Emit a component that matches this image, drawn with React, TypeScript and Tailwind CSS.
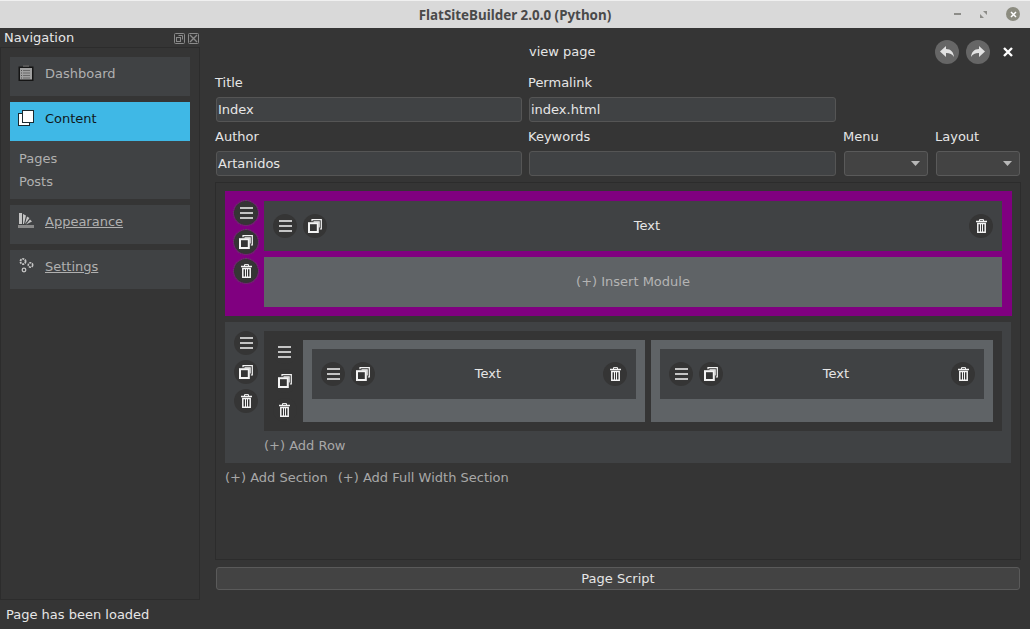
import React from 'react';

const Bars = () => (
  <svg width="13" height="12" viewBox="0 0 13 12" fill="none" stroke="#f4f4f4" strokeWidth="1.5">
    <path d="M0 1h13M0 6h13M0 11h13" />
  </svg>
);

const Copy = () => (
  <svg width="14" height="14" viewBox="0 0 14 14" fill="none" stroke="#f4f4f4">
    <rect x="1" y="4.200" width="8.800" height="8.800" strokeWidth="2" />
    <path d="M4 2.200V0.700H13.300V10H11.800" strokeWidth="1.200" />
    <path d="M5.500 2.900H11.200V8.500" strokeWidth="1.100" />
  </svg>
);

const Trash = () => (
  <svg width="11" height="14" viewBox="0 0 11 14" fill="none" stroke="#f4f4f4">
    <path d="M0 2.500h11" strokeWidth="1.500" />
    <path d="M3.500 2V0.600h4V2" strokeWidth="1" />
    <path d="M1.800 4.500h7.400v8.700H1.800z" strokeWidth="1.500" />
    <path d="M4.500 5v8M6.500 5v8" strokeWidth="1" />
  </svg>
);

const Round = ({ children, dotted }: { children: React.ReactNode; dotted?: boolean }) => (
  <div className={`flex h-6 w-6 items-center justify-center rounded-full bg-[#353535] ${dotted ? 'outline-1 outline-dotted outline-[#555555]' : ''}`}>
    {children}
  </div>
);

const ElementBar = () => (
  <div className="flex h-[50px] items-center bg-[#404244] px-[9px] text-[#e6e6e6]">
    <div className="flex gap-[6px]">
      <Round><Bars /></Round>
      <Round><Copy /></Round>
    </div>
    <div className="flex-1 pr-[2px] text-center">Text</div>
    <Round><Trash /></Round>
  </div>
);

const SideTools = ({ dotted }: { dotted?: boolean }) => (
  <div className="flex w-6 flex-col items-center gap-[5px]">
    <Round dotted={dotted}><Bars /></Round>
    <Round dotted={dotted}><Copy /></Round>
    <Round dotted={dotted}><Trash /></Round>
  </div>
);

const NavItem = ({ icon, label, link, active }: { icon: React.ReactNode; label: string; link?: boolean; active?: boolean }) => (
  <div className={`flex h-[39px] items-start pl-2 pt-[9px] ${active ? 'bg-[#3fb8e6] text-[#10181c]' : 'bg-[#404244] text-[#b0b0b0]'}`}>
    <div className="-mt-px flex h-4 w-4 items-center justify-center">{icon}</div>
    <span className={`ml-[11px] ${link ? 'underline' : ''}`}>{label}</span>
  </div>
);

const Field = ({ label, value, width = 'w-[307px]' }: { label: string; value?: string; width?: string }) => (
  <div className={`flex flex-col ${width}`}>
    <div className="-ml-px h-[23px] pt-px text-[#e6e6e6]">{label}</div>
    <div className="flex h-[25px] items-center rounded-[3px] border border-[#555555] bg-[#404244] pl-[1px] text-[#e6e6e6]">{value}</div>
  </div>
);

const Combo = ({ label }: { label: string }) => (
  <div className="flex w-[84px] flex-col">
    <div className="-ml-px h-[23px] pt-px text-[#e6e6e6]">{label}</div>
    <div className="flex h-[25px] items-center justify-end rounded-[3px] border border-[#5a5a5a] bg-[#434343] pr-[7px]">
      <svg width="9" height="5" viewBox="0 0 9 5"><path d="M0 0h9L4.500 5z" fill="#b8b8b8" /></svg>
    </div>
  </div>
);

export default function App() {
  return (
    <div className="flex h-[629px] w-[1030px] flex-col overflow-hidden bg-[#353535] font-['DejaVu_Sans',sans-serif] text-[13px] leading-[16px]">
      <div className="relative flex h-[28px] items-center justify-center border-t border-[#f0f0f0] bg-[#d9d9d9] font-['Noto_Sans',sans-serif] text-[13.4px] font-bold text-[#4a4a4a]">
        FlatSiteBuilder 2.0.0 (Python)
        <div className="absolute right-[10px] top-[6px] flex items-center gap-[19px]">
          <div className="h-[2px] w-[7px] bg-[#8c8c88]" />
          <svg width="7" height="7" viewBox="0 0 7 7" fill="#8c8c88"><path d="M3 0h4v4zM0 3l4 4H0z" /></svg>
          <div className="flex h-[14px] w-[14px] items-center justify-center rounded-full bg-[#8c8c80]">
            <svg width="7" height="7" viewBox="0 0 7 7" stroke="#ffffff" strokeWidth="1.500"><path d="M1 1l5 5M6 1L1 6" /></svg>
          </div>
        </div>
      </div>

      <div className="flex flex-1">
        <div className="flex w-[200px] flex-col">
          <div className="flex h-[19px] items-center justify-between pl-1 pr-[1px] pt-[1px] text-[#e6e6e6]">
            <span>Navigation</span>
            <div className="flex gap-[3px]">
              <svg width="11" height="11" viewBox="0 0 11 11" fill="none" stroke="#8a8a8a"><rect x="0.500" y="0.500" width="10" height="10" rx="1" /><rect x="2.500" y="4.500" width="4" height="4" /><path d="M4.500 2.500h4v4" /></svg>
              <svg width="11" height="11" viewBox="0 0 11 11" fill="none" stroke="#8a8a8a"><rect x="0.500" y="0.500" width="10" height="10" rx="1" /><path d="M2 2l7 7M9 2l-7 7" strokeWidth="1.400" /></svg>
            </div>
          </div>
          <div className="flex h-[553px] w-[200px] flex-col border border-[#2c2c2c] p-[9px]">
            <NavItem
              label="Dashboard"
              icon={
                <svg width="16" height="16" viewBox="0 0 16 16">
                  <rect x="0.500" y="1.500" width="15" height="14.500" fill="#151515" />
                  <rect x="2" y="3" width="12" height="11.500" fill="#a0a0a0" />
                  <rect x="5" y="0" width="6" height="2" fill="#555555" />
                  <path d="M5 5.500h7M5 8h7M5 10.500h7M5 13h7" stroke="#5c5c5c" strokeWidth="0.800" />
                  <path d="M3 5.500h1M3 8h1M3 10.500h1M3 13h1" stroke="#3a3a3a" strokeWidth="0.800" />
                </svg>
              }
            />
            <div className="mt-[6px]">
              <NavItem
                active
                label="Content"
                icon={
                  <svg width="16" height="16" viewBox="0 0 16 16" fill="#ffffff" stroke="#1a2a30" strokeWidth="1">
                    <rect x="0.500" y="3.500" width="11" height="12" />
                    <rect x="4.500" y="0.500" width="11" height="12" />
                  </svg>
                }
              />
            </div>
            <div className="flex h-[58px] flex-col gap-[7px] bg-[#404244] pl-[9px] pt-[10px] text-[#b0b0b0]">
              <span>Pages</span>
              <span>Posts</span>
            </div>
            <div className="mt-[6px]">
              <NavItem
                link
                label="Appearance"
                icon={
                  <svg width="16" height="16" viewBox="0 0 16 16" fill="#c4c4c4">
                    <path d="M1 0h3l0 11H1zM5 1l3 1.500-2 8.500H5zM9 3.500l2.500 1.500L7 11zM12 6.500l2 2L8 11.500z" />
                    <path d="M0 12h16v3H0z" fill="#8a8a8a" />
                  </svg>
                }
              />
            </div>
            <div className="mt-[6px]">
              <NavItem
                link
                label="Settings"
                icon={
                  <svg width="16" height="16" viewBox="0 0 16 16" fill="none" stroke="#c4c4c4">
                    <circle cx="5" cy="3.500" r="2.600" strokeWidth="1.800" strokeDasharray="2 0.800" />
                    <circle cx="12.500" cy="7" r="2.200" strokeWidth="1.600" strokeDasharray="2 0.700" />
                    <circle cx="6" cy="12" r="1.800" strokeWidth="1.300" />
                  </svg>
                }
              />
            </div>
          </div>
          <div className="pl-[6px] pt-[7px] text-[#e6e6e6]">Page has been loaded</div>
        </div>

        <div className="relative ml-[15px] flex w-[806px] flex-col">
          <div className="h-[46px] pl-[314px] pt-[16px] text-[#e6e6e6]">
            view page
            <div className="absolute right-[1px] top-[12px] flex items-center gap-[7px]">
              <div className="flex h-6 w-6 items-center justify-center rounded-full bg-[#666666]">
                <svg width="14" height="12" viewBox="0 0 14 12" fill="#e2e2e2"><path d="M6 0v3c5 0 7.500 3 8 8-1.500-2.800-4-4-8-4v4L0 5.500z" /></svg>
              </div>
              <div className="flex h-6 w-6 items-center justify-center rounded-full bg-[#666666]">
                <svg width="14" height="12" viewBox="0 0 14 12" fill="#e2e2e2"><path d="M8 0v3C3 3 .5 6 0 11c1.500-2.800 4-4 8-4v4l6-5.500z" /></svg>
              </div>
              <div className="-ml-px flex h-6 w-6 items-center justify-center rounded-full">
                <svg width="10" height="10" viewBox="0 0 10 10" stroke="#ffffff" strokeWidth="2.400"><path d="M1 1l8 8M9 1l-8 8" /></svg>
              </div>
            </div>
          </div>

          <div className="flex gap-[7px] pl-[1px]">
            <Field label="Title" value="Index" width="w-[306px]" />
            <Field label="Permalink" value="index.html" />
          </div>
          <div className="mt-[6px] flex gap-[7px] pl-[1px]">
            <Field label="Author" value="Artanidos" width="w-[306px]" />
            <Field label="Keywords" />
            <div className="ml-px"><Combo label="Menu" /></div>
            <div className="ml-px"><Combo label="Layout" /></div>
          </div>

          <div className="mt-[6px] h-[378px] border border-[#2c2c2c] pl-[9px] pr-[8px] pt-[8px]">
            <div className="flex h-[125px] bg-[#800080] pl-[9px] pr-[10px] pt-[10px]">
              <div className="w-[30px]"><SideTools dotted /></div>
              <div className="flex-1">
                <ElementBar />
                <div className="mt-[6px] flex h-[50px] items-center justify-center bg-[#5f6366] text-[#b4b4b4]">(+) Insert Module</div>
              </div>
            </div>

            <div className="mr-[1px] mt-[6px] h-[141px] bg-[#404244] px-[9px] pt-[9px]">
              <div className="flex">
                <div className="w-[30px]"><SideTools /></div>
                <div className="flex h-[100px] flex-1 bg-[#353535] pr-[9px] pt-[9px]">
                  <div className="flex w-[39px] justify-center pl-[2px]">
                    <SideTools />
                  </div>
                  <div className="flex flex-1 gap-[6px]">
                    <div className="h-[82px] flex-1 bg-[#5f6366] px-[9px] pt-[9px]"><ElementBar /></div>
                    <div className="h-[82px] flex-1 bg-[#5f6366] px-[9px] pt-[9px]"><ElementBar /></div>
                  </div>
                </div>
              </div>
              <div className="ml-[30px] mt-[7px] text-[#a8a8a8]">(+) Add Row</div>
            </div>

            <div className="mt-[7px] flex gap-[10px] text-[#a8a8a8]">
              <span>(+) Add Section</span>
              <span>(+) Add Full Width Section</span>
            </div>
          </div>

          <div className="mx-[1px] mt-[7px] flex h-[23px] items-center justify-center rounded-[3px] border border-[#5a5a5a] bg-[#434343] text-[#e6e6e6]">Page Script</div>
        </div>
      </div>
    </div>
  );
}
